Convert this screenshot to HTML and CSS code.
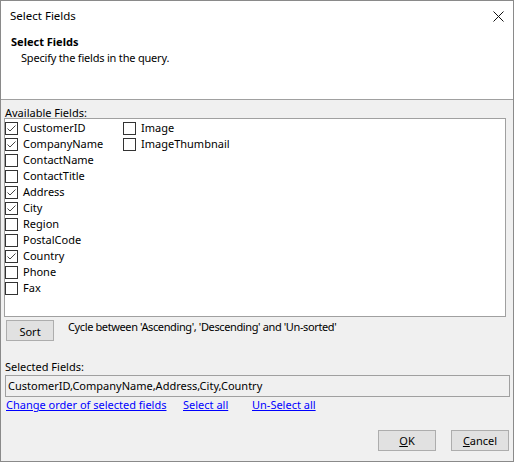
FILE: index.html
```html
<!DOCTYPE html>
<html>
<head>
<meta charset="utf-8">
<link rel="stylesheet" href="styles.css">
</head>
<body>
<div class="window">
  <div class="header">
    <div class="titlebar">
      <span class="title">Select Fields</span>
      <svg class="close" width="11" height="11" viewBox="0 0 11 11"><path d="M0.5 0.5 L10.5 10.5 M10.5 0.5 L0.5 10.5" stroke="#111" stroke-width="1" fill="none"/></svg>
    </div>
    <div class="heading">Select Fields</div>
    <div class="subheading">Specify the fields in the query.</div>
  </div>
  <div class="content">
    <div class="label first">Available Fields:</div>
    <div class="listbox">
      <div class="col col1">
        <div class="row"><span class="cb checked"><svg viewBox="0 0 13 13"><path d="M2.5 6.5 L5 9 L10.5 3.5" stroke="#444" stroke-width="1" fill="none"/></svg></span><span class="txt">CustomerID</span></div>
        <div class="row"><span class="cb checked"><svg viewBox="0 0 13 13"><path d="M2.5 6.5 L5 9 L10.5 3.5" stroke="#444" stroke-width="1" fill="none"/></svg></span><span class="txt">CompanyName</span></div>
        <div class="row"><span class="cb"></span><span class="txt">ContactName</span></div>
        <div class="row"><span class="cb"></span><span class="txt">ContactTitle</span></div>
        <div class="row"><span class="cb checked"><svg viewBox="0 0 13 13"><path d="M2.5 6.5 L5 9 L10.5 3.5" stroke="#444" stroke-width="1" fill="none"/></svg></span><span class="txt">Address</span></div>
        <div class="row"><span class="cb checked"><svg viewBox="0 0 13 13"><path d="M2.5 6.5 L5 9 L10.5 3.5" stroke="#444" stroke-width="1" fill="none"/></svg></span><span class="txt">City</span></div>
        <div class="row"><span class="cb"></span><span class="txt">Region</span></div>
        <div class="row"><span class="cb"></span><span class="txt">PostalCode</span></div>
        <div class="row"><span class="cb checked"><svg viewBox="0 0 13 13"><path d="M2.5 6.5 L5 9 L10.5 3.5" stroke="#444" stroke-width="1" fill="none"/></svg></span><span class="txt">Country</span></div>
        <div class="row"><span class="cb"></span><span class="txt">Phone</span></div>
        <div class="row"><span class="cb"></span><span class="txt">Fax</span></div>
      </div>
      <div class="col col2">
        <div class="row"><span class="cb"></span><span class="txt">Image</span></div>
        <div class="row"><span class="cb"></span><span class="txt">ImageThumbnail</span></div>
      </div>
    </div>
    <div class="sortrow">
      <button class="btn sort">Sort</button>
      <span class="hint">Cycle between 'Ascending', 'Descending' and 'Un-sorted'</span>
    </div>
    <div class="label second">Selected Fields:</div>
    <div class="textbox">CustomerID,CompanyName,Address,City,Country</div>
    <div class="links">
      <span><a class="link" href="#">Change order of selected fields</a></span>
      <span><a class="link" href="#">Select all</a></span>
      <span><a class="link" href="#">Un-Select all</a></span>
    </div>
    <div class="footer">
      <button class="btn dlg"><u>O</u>K</button>
      <button class="btn dlg"><u>C</u>ancel</button>
    </div>
  </div>
</div>
</body>
</html>
```

FILE: styles.css
```css
* { box-sizing: border-box; }
html, body { margin: 0; padding: 0; }
body {
  width: 514px;
  height: 462px;
  font-family: "Noto Sans", "DejaVu Sans", sans-serif;
  font-size: 11px;
  color: #000;
  background: #fff;
}
.window {
  width: 514px;
  height: 462px;
  border: 1px solid #8a8a8a;
  display: flex;
  flex-direction: column;
  background: #f0f0f0;
}
.header {
  height: 99px;
  background: #fff;
  border-bottom: 1px solid #a0a0a0;
  flex: none;
}
.titlebar {
  height: 30px;
  display: flex;
  align-items: center;
  justify-content: space-between;
  padding-left: 9px;
  padding-right: 9px;
}
.title { line-height: 16px; font-size: 11.5px; }
.close { display: block; }
.heading {
  font-weight: bold;
  line-height: 16px;
  padding-left: 10px;
  margin-top: 3px;
}
.subheading {
  line-height: 16px;
  padding-left: 20px;
  letter-spacing: -0.2px;
}
.content {
  flex: 1;
  display: flex;
  flex-direction: column;
  padding-top: 5px;
}
.label {
  line-height: 16px;
  padding-left: 4px;
}
.label.first { height: 13px; }
.label.second { margin-top: 18px; height: 16px; }
.listbox {
  margin-left: 3px;
  width: 502px;
  height: 199px;
  border: 1px solid #a0a0a0;
  background: #fff;
  padding-top: 1px;
  display: flex;
}
.col1 { width: 118px; flex: none; }
.row {
  height: 16px;
  display: flex;
  align-items: flex-start;
}
.cb {
  width: 13px;
  height: 13px;
  margin-top: 2px;
  border: 1px solid #333;
  background: #fff;
  flex: none;
  display: block;
}
.cb svg { display: block; margin: -1px 0 0 -1px; width: 13px; height: 13px; }
.txt {
  line-height: 16px;
  margin-left: 5px;
  white-space: nowrap;
}
.sortrow {
  margin-top: 3px;
  height: 21px;
  display: flex;
  align-items: flex-start;
  padding-left: 5px;
}
.btn {
  font-family: inherit;
  font-size: 11px;
  color: #000;
  background: #e1e1e1;
  border: 1px solid #adadad;
  padding: 0;
  margin: 0;
  line-height: 18px;
  height: 21px;
}
.sort { width: 48px; padding-top: 2px; }
.hint {
  margin-left: 14px;
  line-height: 14px;
  white-space: nowrap;
  letter-spacing: -0.38px;
}
.textbox {
  margin-left: 4px;
  width: 505px;
  height: 22px;
  border: 1px solid #a0a0a0;
  background: #f0f0f0;
  line-height: 19px;
  padding-left: 2px;
  white-space: nowrap;
}
.links {
  height: 16px;
  display: grid;
  grid-template-columns: 177px 69px auto;
  padding-left: 5px;
}
.link {
  color: #0000ff;
  text-decoration: underline;
  line-height: 16px;
  white-space: nowrap;
}
.footer {
  margin-top: auto;
  margin-bottom: 10px;
  display: flex;
  justify-content: flex-end;
  gap: 15px;
  padding-right: 4px;
}
.dlg { width: 58px; }
.dlg u { text-decoration: underline; }
```
